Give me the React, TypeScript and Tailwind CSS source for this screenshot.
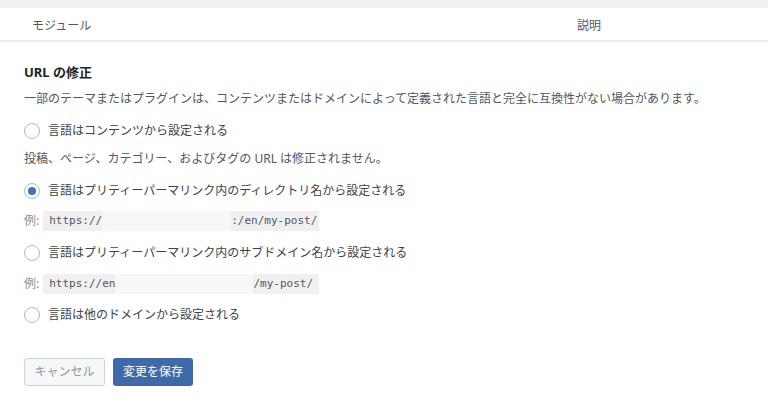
const FONT = "font-['Noto_Sans','Noto_Sans_CJK_JP',sans-serif]";

function Radio({ checked }: { checked?: boolean }) {
  return (
    <span className="flex h-4 w-4 shrink-0 items-center justify-center rounded-full border border-[#b5b8bc] bg-white">
      {checked && <span className="h-2 w-2 rounded-full bg-[#3a78c2]" />}
    </span>
  );
}

function Option({ label, checked }: { label: string; checked?: boolean }) {
  return (
    <label className="flex h-5 items-center gap-2 text-[12px] text-[#3c434a]">
      <Radio checked={checked} />
      <span>{label}</span>
    </label>
  );
}

function Example({ pre, hidden, post }: { pre: string; hidden: string; post: string }) {
  return (
    <div className="flex h-5 items-center gap-1 text-[12px] text-[#8c8f94]">
      <span>例:</span>
      <code className="flex h-5 w-[276px] items-center bg-[#f0f0f1] pl-[6px] font-['DejaVu_Sans_Mono',monospace] text-[11px] text-[#50575e]">
        <span>{pre}</span>
        <span className={"h-5 bg-[#f7f7f7] " + hidden} />
        <span>{post}</span>
      </code>
    </div>
  );
}

export default function App() {
  return (
    <div className={"h-[408px] w-[768px] overflow-hidden bg-white " + FONT}>
      <div className="h-2 bg-[#f0f0f1]" />
      <div className="flex h-[34px] items-center border-b-2 border-[#ececec] pt-[3px] text-[12px] text-[#50575e]">
        <span className="w-[577px] pl-8">モジュール</span>
        <span>説明</span>
      </div>

      <div className="px-6 pt-5">
        <h3 className="text-[13px] font-bold leading-5 text-[#1d2327]">URL の修正</h3>
        <p className="mt-[7px] text-[12px] leading-5 text-[#50575e]">
          一部のテーマまたはプラグインは、コンテンツまたはドメインによって定義された言語と完全に互換性がない場合があります。
        </p>

        <div className="mt-3">
          <Option label="言語はコンテンツから設定される" />
        </div>
        <p className="mt-2 text-[12px] leading-5 text-[#50575e]">
          投稿、ページ、カテゴリー、およびタグの URL は修正されません。
        </p>

        <div className="mt-3">
          <Option label="言語はプリティーパーマリンク内のディレクトリ名から設定される" checked />
        </div>
        <div className="mt-[10px]">
          <Example pre="https://" hidden="w-[129px]" post=":/en/my-post/" />
        </div>

        <div className="mt-3">
          <Option label="言語はプリティーパーマリンク内のサブドメイン名から設定される" />
        </div>
        <div className="mt-[11px]">
          <Example pre="https://en" hidden="w-[138px]" post="/my-post/" />
        </div>

        <div className="mt-[11px]">
          <Option label="言語は他のドメインから設定される" />
        </div>

        <div className="mt-[33px] flex gap-2">
          <button className="h-[28px] w-[81px] rounded-[3px] border border-[#c5d6ea] bg-[#f6f7f7] text-[12px] text-[#8c9aa8]">
            キャンセル
          </button>
          <button className="h-[28px] w-[80px] rounded-[3px] bg-[#3f6aaa] text-[12px] text-white">
            変更を保存
          </button>
        </div>
      </div>
    </div>
  );
}
